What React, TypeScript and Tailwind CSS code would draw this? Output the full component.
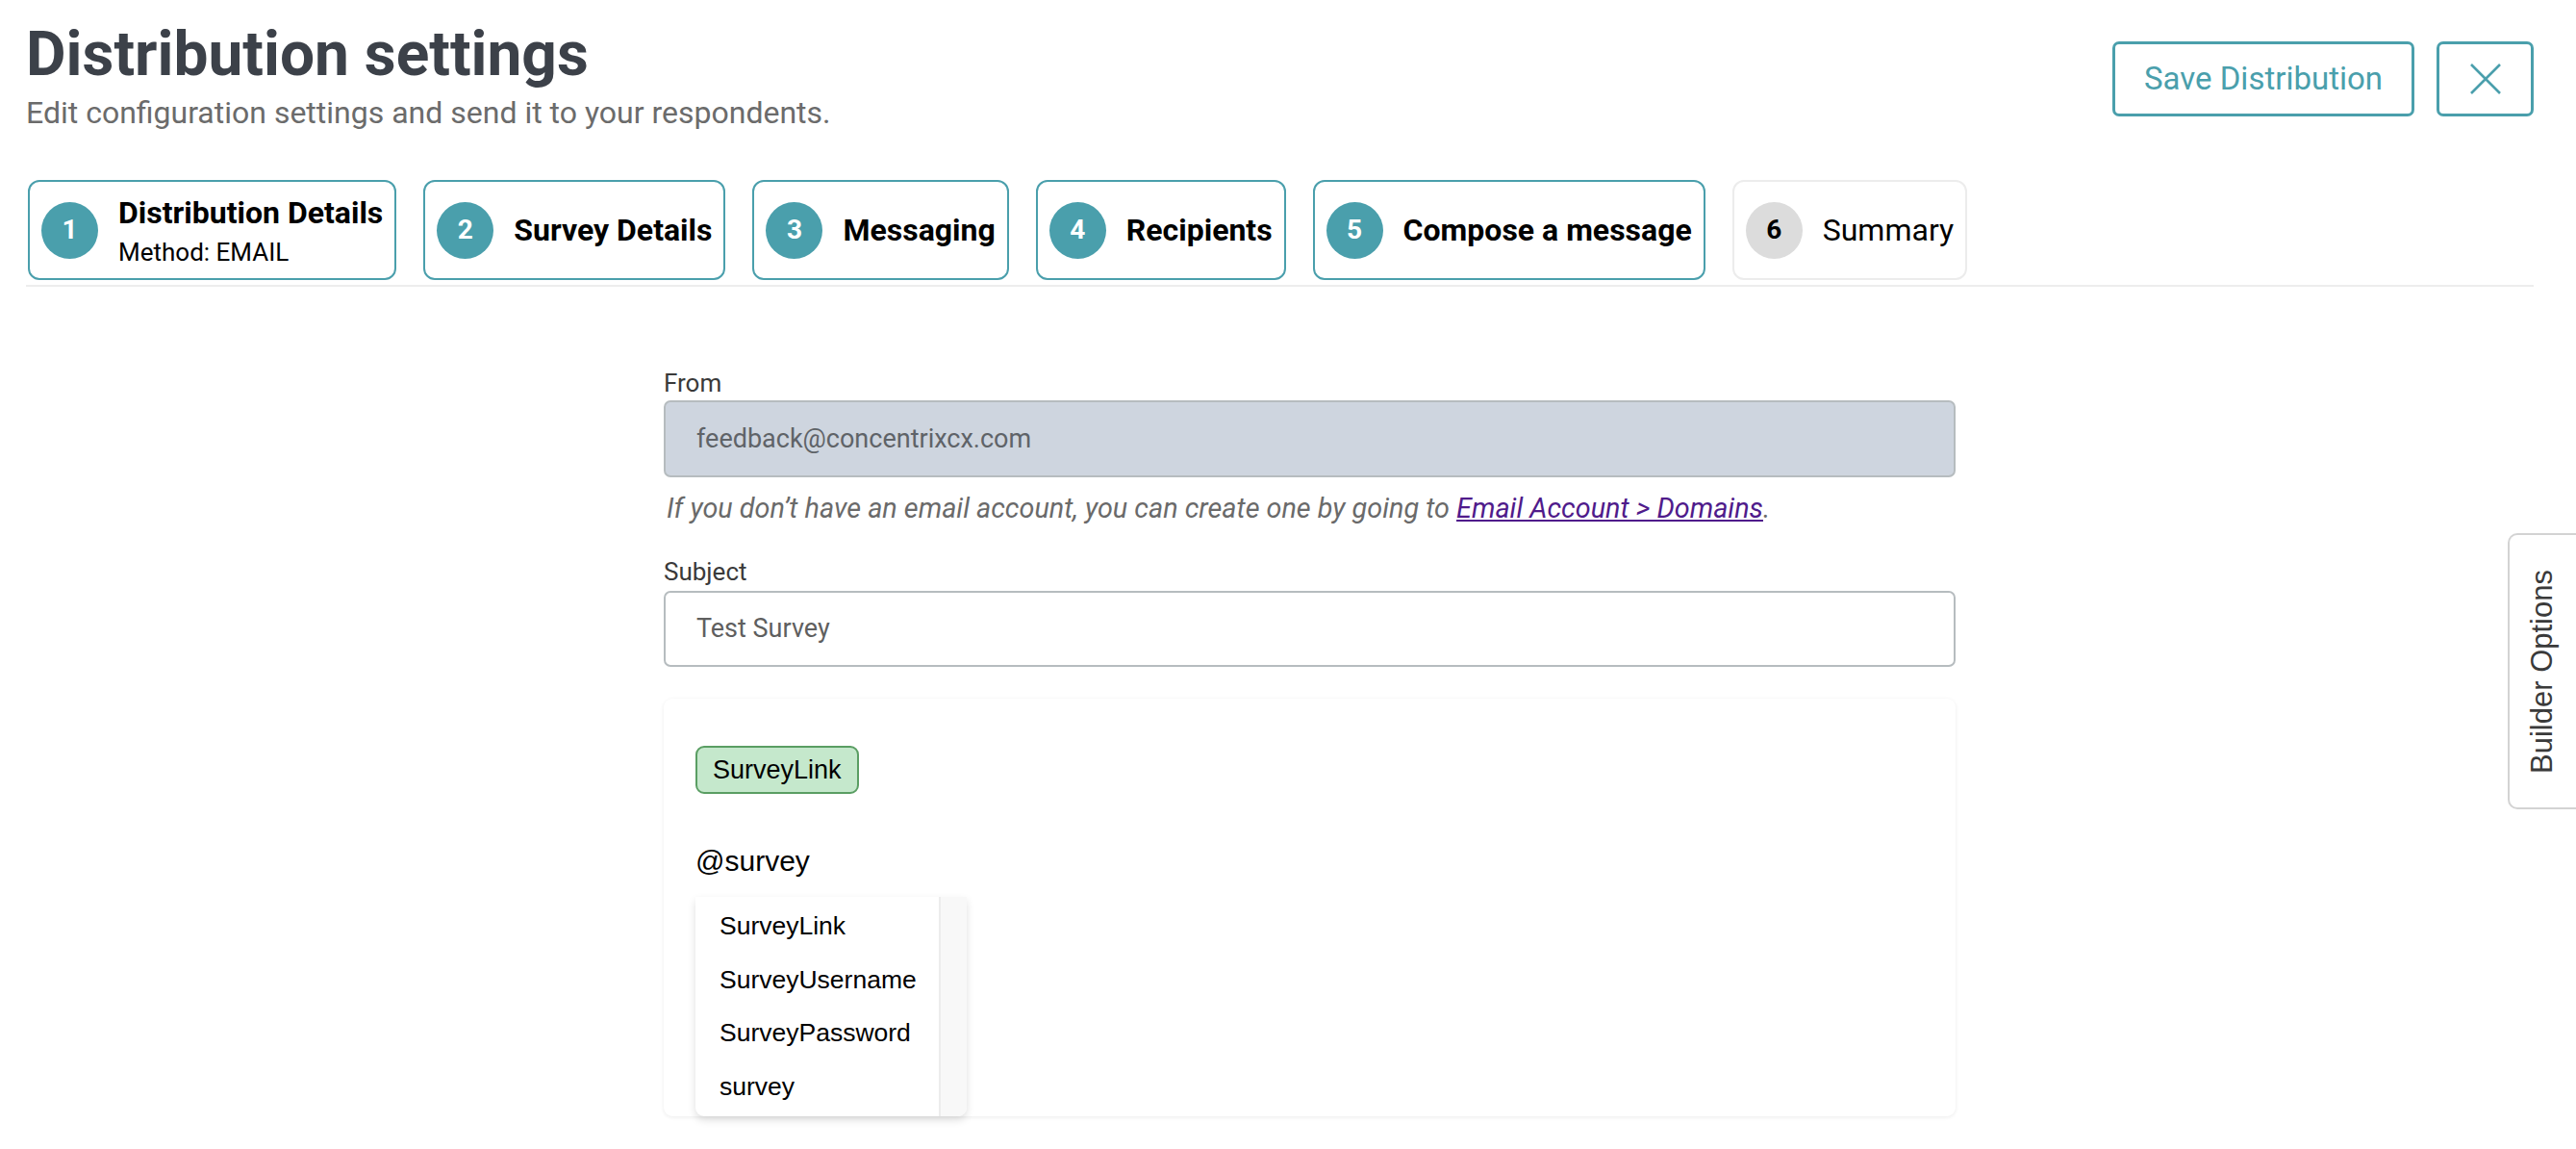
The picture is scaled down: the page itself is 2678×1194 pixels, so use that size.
import React from 'react'

type Step = { n: number; title: string; sub?: string; done: boolean }

const steps: Step[] = [
  { n: 1, title: 'Distribution Details', sub: 'Method: EMAIL', done: true },
  { n: 2, title: 'Survey Details', done: true },
  { n: 3, title: 'Messaging', done: true },
  { n: 4, title: 'Recipients', done: true },
  { n: 5, title: 'Compose a message', done: true },
  { n: 6, title: 'Summary', done: false },
]

const mentions = ['SurveyLink', 'SurveyUsername', 'SurveyPassword', 'survey']

function StepBox({ s }: { s: Step }) {
  return (
    <div
      className={
        s.done
          ? 'flex h-[104px] items-center gap-[21px] rounded-[12px] border-2 border-[#4a9fac] bg-white pl-[12px] pr-[12px]'
          : 'flex h-[104px] items-center gap-[21px] rounded-[12px] border-2 border-[#ececec] bg-white pl-[12px] pr-[12px]'
      }
    >
      <div
        className={
          s.done
            ? 'flex h-[59px] w-[59px] shrink-0 items-center justify-center rounded-full bg-[#4a9fac] text-[28px] font-bold text-white'
            : 'flex h-[59px] w-[59px] shrink-0 items-center justify-center rounded-full bg-[#dcdcdc] text-[28px] font-bold text-black'
        }
      >
        {s.n}
      </div>
      {s.sub ? (
        <div className="flex flex-col">
          <span className="text-[32px] font-bold leading-[36px] text-black">{s.title}</span>
          <span className="mt-[9px] text-[26px] leading-[28px] text-black">{s.sub}</span>
        </div>
      ) : (
        <span className={s.done ? 'text-[32px] font-bold text-black' : 'text-[32px] text-black'}>{s.title}</span>
      )}
    </div>
  )
}

export default function App() {
  return (
    <div className="relative h-[1194px] w-[2678px] overflow-hidden bg-white font-['Roboto',sans-serif]">
      <div className="pl-[27px] pr-[44px]">
        {/* Header */}
        <div className="flex items-start justify-between">
          <div>
            <h1 className="mt-[25px] text-[64px] font-bold leading-[64px] text-[#3c4149]">Distribution settings</h1>
            <p className="mt-[10px] text-[32px] leading-[36px] text-[#6b6b6b]">
              Edit configuration settings and send it to your respondents.
            </p>
          </div>
          <div className="mt-[43px] flex gap-[23px]">
            <button className="h-[78px] w-[314px] rounded-[7px] border-[3px] border-[#4a9fac] text-[33px] text-[#4a9fac]">
              Save Distribution
            </button>
            <button className="flex h-[78px] w-[101px] items-center justify-center rounded-[7px] border-[3px] border-[#4a9fac]">
              <svg width="34" height="32" viewBox="0 0 34 32" fill="none">
                <path d="M2 1 L32 31 M32 1 L2 31" stroke="#4a9fac" strokeWidth="2.6" />
              </svg>
            </button>
          </div>
        </div>

        {/* Steps */}
        <div className="mt-[52px] flex gap-[28px] pl-[2px]">
          {steps.map(s => (
            <StepBox key={s.n} s={s} />
          ))}
        </div>
        <div className="mt-[5px] h-[2px] bg-[#ededed]" />
      </div>

      {/* Form */}
      <div className="ml-[690px] mt-[86px] w-[1343px]">
        <label className="block text-[26px] leading-[28px] text-[#3a3a3a]">From</label>
        <div className="mt-[4px] flex h-[80px] items-center rounded-[7px] border-2 border-[#b6bcbf] bg-[#ced5df] pl-[32px] text-[27px] text-[#5f6368]">
          feedback@concentrixcx.com
        </div>
        <p className="mt-[16px] pl-[3px] text-[28.8px] italic leading-[32px] text-[#6a6a6a]">
          If you don’t have an email account, you can create one by going to{' '}
          <a className="text-[#4f1b8b] underline">Email Account &gt; Domains</a>.
        </p>

        <label className="mt-[36px] block text-[26px] leading-[28px] text-[#3a3a3a]">Subject</label>
        <div className="mt-[6px] flex h-[79px] items-center rounded-[7px] border-2 border-[#b6bcbf] bg-white pl-[32px] text-[27px] text-[#5f5f5f]">
          Test Survey
        </div>

        {/* Editor */}
        <div className="mt-[33px] rounded-[9px] bg-white pl-[33px] pt-[49px] shadow-[0_1px_4px_rgba(0,0,0,0.08)] font-['Liberation_Sans',Arial,sans-serif]">
          <span className="inline-flex h-[50px] items-center rounded-[9px] border-2 border-[#5a9e63] bg-[#c5e8cc] px-[16px] text-[27px] text-black">
            SurveyLink
          </span>
          <div className="mt-[52px] text-[30px] leading-[36px] text-black">@survey</div>
          <div className="relative mb-[-3px] mt-[19px] flex w-[282px] rounded-b-[9px] bg-white shadow-[0_4px_8px_rgba(0,0,0,0.13)]">
            <ul className="flex-1 py-[3px] pl-[25px]">
              {mentions.map(m => (
                <li key={m} className="text-[26.5px] leading-[55.5px] text-black">
                  {m}
                </li>
              ))}
            </ul>
            <div className="w-[29px] rounded-br-[9px] border-l-2 border-[#ececec] bg-[#f8f8f8]" />
          </div>
        </div>
      </div>

      {/* Builder options tab */}
      <div className="absolute right-0 top-[554px] flex h-[287px] w-[71px] items-center justify-center rounded-l-[10px] border-2 border-r-0 border-[#d3d3d3] bg-white">
        <span className="rotate-180 whitespace-nowrap font-['Liberation_Sans',Arial,sans-serif] text-[31px] text-[#3a3a3a] [writing-mode:vertical-rl]">
          Builder Options
        </span>
      </div>
    </div>
  )
}
